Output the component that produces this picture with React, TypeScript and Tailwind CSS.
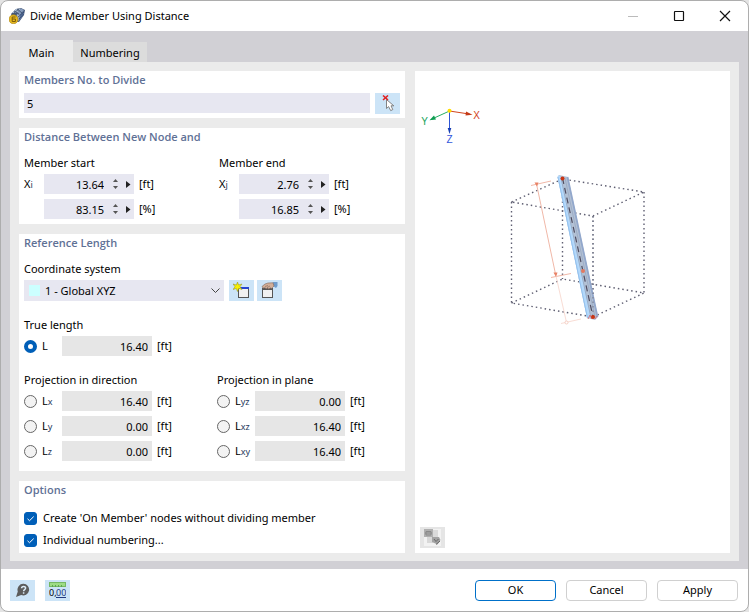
import { useState } from "react";
import type { ReactNode } from "react";

const cubeEdges = [
  "M511.5 202 562.5 179 644 192 593 216Z",
  "M511.5 303 562.5 279 644 293 593 317Z",
  "M511.5 202V303",
  "M562.5 179V279",
  "M644 192V293",
  "M593 216V317",
];

const directions = [
  { id: "Lx", sub: "x", value: "16.40" },
  { id: "Ly", sub: "y", value: "0.00" },
  { id: "Lz", sub: "z", value: "0.00" },
];

const planes = [
  { id: "Lyz", sub: "yz", value: "0.00" },
  { id: "Lxz", sub: "xz", value: "16.40" },
  { id: "Lxy", sub: "xy", value: "16.40" },
];

function Card({ title, className, children }: { title: string; className: string; children: ReactNode }) {
  return (
    <section className={`bg-white px-[5px] ${className}`}>
      <h2 className="font-['Open_Sans',sans-serif] font-semibold text-[#5f7196]">{title}</h2>
      {children}
    </section>
  );
}

function IconButton({ label, children }: { label: string; children: ReactNode }) {
  return (
    <button
      type="button"
      aria-label={label}
      className="flex h-[21px] w-[25px] shrink-0 items-center justify-center bg-[#cce4f7] hover:bg-[#b8daf4]"
    >
      {children}
    </button>
  );
}

function SpinField({ name, sub, label, value, unit }: { name?: string; sub?: string; label: string; value: string; unit: string }) {
  return (
    <div className="flex h-5 items-center">
      <label htmlFor={label} className="w-5 shrink-0">
        {name}
        <span className="text-[9px] text-[#1f3a5c]">{sub}</span>
      </label>
      <div className="flex h-5 w-[90px] items-center bg-[#e7e7f1]">
        <input
          id={label}
          aria-label={label}
          defaultValue={value}
          className="h-5 w-[60px] min-w-0 bg-transparent text-right outline-none"
        />
        <div className="ml-[5px] flex w-3 flex-col items-center gap-1">
          <button type="button" aria-label={`Increase ${label}`}>
            <svg width="5" height="3" className="block fill-[#555]"><path d="M0 3 2.5 0 5 3Z" /></svg>
          </button>
          <button type="button" aria-label={`Decrease ${label}`}>
            <svg width="5" height="3" className="block fill-[#555]"><path d="M0 0 2.5 3 5 0Z" /></svg>
          </button>
        </div>
        <button type="button" aria-label={`More for ${label}`} className="ml-[5px]">
          <svg width="5" height="7" className="block fill-[#222]"><path d="M0 0 4.5 3.5 0 7Z" /></svg>
        </button>
      </div>
      <span className="ml-[5px]">{unit}</span>
    </div>
  );
}

function LengthRow({ id, sub, value, checked, onSelect }: { id: string; sub?: string; value: string; checked: boolean; onSelect: (id: string) => void }) {
  return (
    <div className="flex h-5 items-center">
      <label className="flex w-[38px] shrink-0 items-center gap-[5px]">
        <input
          type="radio"
          name="length"
          aria-label={id}
          checked={checked}
          onChange={() => onSelect(id)}
          className="size-[13px] shrink-0 appearance-none rounded-full border border-[#666] bg-[#f3f3f3] checked:border-4 checked:border-[#005fb8] checked:bg-white"
        />
        <span>
          L<span className="text-[9px] text-[#1f3a5c]">{sub}</span>
        </span>
      </label>
      <input
        readOnly
        aria-label={`${id} value`}
        value={value}
        className="h-5 w-[90px] bg-[#e6e6e6] pr-1 text-right outline-none"
      />
      <span className="ml-[5px]">[ft]</span>
    </div>
  );
}

function CheckRow({ label }: { label: string }) {
  return (
    <label className="flex h-[22px] items-center gap-1.5">
      <span className="relative size-[13px]">
        <input
          type="checkbox"
          defaultChecked
          className="peer block size-[13px] appearance-none rounded-[3px] border border-[#777] bg-[#f3f3f3] checked:border-[#005fb8] checked:bg-[#005fb8]"
        />
        <svg viewBox="0 0 13 13" className="pointer-events-none absolute inset-0 hidden fill-none stroke-white peer-checked:block">
          <path d="M3.5 6.8 5.5 8.7 9.7 4.6" />
        </svg>
      </span>
      {label}
    </label>
  );
}

function AppIcon() {
  return (
    <svg width="16" height="16" viewBox="0 0 16 16">
      <path d="M2 6 7 1 12 0 16 2 15 7 10 14 5 13Z" fill="#46597a" />
      <path d="M3 5 7 1 12 .5 8 5Z" fill="#a9bbd3" />
      <path d="M8 5 12 .5 15 2 11 7Z" fill="#869cbe" />
      <path d="M8 6 11 7 10 13 7 11Z" fill="#a3b3ca" />
      <path d="M11 7 15 3 14.5 7 10.5 12.5Z" fill="#5c76a6" />
      <path d="M5 3 10 6M8 1 13 5M9 9 15 4M10 11 14.5 6M10 1 5 5" stroke="#2a3c5a" strokeWidth=".7" />
      <circle cx="4.5" cy="11.3" r="4.5" fill="#e6b91f" stroke="#a37a0e" strokeWidth=".6" />
      <path d="M6.6 9H3.2V13.5H6.4V11H3.2" fill="none" stroke="#7d5c0a" />
    </svg>
  );
}

function Preview() {
  return (
    <svg viewBox="415 71 315 482" preserveAspectRatio="xMinYMin meet" className="block w-full" role="img" aria-label="Member preview">
      <g strokeWidth="1">
        <path d="M449.5 111 467 113.7" stroke="#d2441d" />
        <path d="M466 111.5 472.5 114.7 465.5 115.5Z" fill="#c43a17" />
        <path d="M449.5 111 435 117.6" stroke="#23ae63" />
        <path d="M429.5 120.2 434 115.6 436 119.6Z" fill="#0d9d50" />
        <path d="M449.5 111V128" stroke="#2d55d5" />
        <path d="M447.7 128H451.3L449.5 134Z" fill="#173eb5" />
        <circle cx="449.5" cy="110.8" r="2" fill="#ffdd00" />
      </g>
      <g fontSize="10" textAnchor="middle" fontFamily="Liberation Sans, Arial, sans-serif">
        <text x="476.5" y="118.5" fill="#d2441d">X</text>
        <text x="424.5" y="125" fill="#16a35a">Y</text>
        <text x="449.5" y="143" fill="#3156dc">Z</text>
      </g>

      {/* bounding box */}
      {cubeEdges.map((d) => (
        <path key={d} d={d} fill="none" stroke="#5f5f72" strokeWidth="1.4" strokeDasharray="1.5 3" />
      ))}

      {/* dimension line */}
      <g fill="none" stroke="#f0b8a8">
        <path d="M536.5 184 555.5 274M531 185.5 551 181M551 277.5 571 273.5" />
        <path d="M556 276 566.5 322.5M561 323.5 581 319" stroke="#f9ddd5" />
        <circle cx="566.5" cy="322.5" r="1.5" fill="#fff" stroke="#f5cfc4" />
      </g>
      <path d="M534.5 182.5H538.5L537 186.5ZM553.5 272.5H557.5L556 277Z" fill="#e98266" />

      {/* member */}
      <path d="M557.5 177 559 175 568 177 598 317 595 320 587 318Z" fill="#b3c1d4" />
      <path d="M557.5 177 559 175 561.5 178 591 317 587 318Z" fill="#b4d9fb" />
      <path d="M558 177 587.5 318" stroke="#93c1ee" />
      <path d="M561 178 590.8 317" stroke="#9aacc5" />
      <path d="M567.5 177 597.5 317" stroke="#93a8cc" strokeWidth="1.8" />
      <path d="M565 178 595 317" stroke="#9dadc6" />
      <path d="M593 216V317" stroke="#7c8193" strokeWidth="1.2" strokeDasharray="1.5 3" />
      <path d="M562.5 178 593 317" stroke="#4f4c60" strokeWidth="1.2" strokeDasharray="6 4" />
      <circle cx="562.5" cy="178.5" r="2" fill="#cc3512" />
      <circle cx="583" cy="271" r="2" fill="#e27a61" />
      <path d="M588 319 590 315 592 319M595 319 597 316" fill="none" stroke="#cf737e" />
      <circle cx="593" cy="317" r="2" fill="#cc3512" />
    </svg>
  );
}

export default function App() {
  const [length, setLength] = useState("L");

  return (
    <div className="min-h-screen bg-[#e4e4e4] font-['Noto_Sans','Open_Sans',sans-serif] text-[11px] leading-[18px] text-black">
      <div className="flex min-h-screen flex-col overflow-hidden rounded-lg border border-[#adadad] bg-white">
        <header className="flex h-[30px] items-center pr-[17px] pl-2">
          <AppIcon />
          <h1 className="ml-[5px]">Divide Member Using Distance</h1>
          <div className="ml-auto flex gap-[34px]">
            <button type="button" aria-label="Minimize" disabled>
              <svg width="12" height="12" className="block"><path d="M1 6.5H11" stroke="#bbb" /></svg>
            </button>
            <button type="button" aria-label="Maximize">
              <svg width="12" height="12" className="block"><rect x="1.5" y="1.5" width="9" height="9" rx=".5" fill="none" stroke="#111" strokeWidth="1.2" /></svg>
            </button>
            <button type="button" aria-label="Close">
              <svg width="12" height="12" className="block"><path d="M1 1 11 11M11 1 1 11" stroke="#111" strokeWidth="1.2" /></svg>
            </button>
          </div>
        </header>

        <main className="flex grow flex-col bg-[#d1d0d5] px-[9px] pt-[9px] pb-2">
          <div role="tablist" className="flex items-end">
            <button type="button" role="tab" aria-selected="true" className="h-[22px] w-[63px] bg-[#ebebeb] pt-1">
              Main
            </button>
            <button type="button" role="tab" aria-selected="false" className="h-5 w-[74px] bg-[#dcdcdc] pt-0.5">
              Numbering
            </button>
          </div>

          <div role="tabpanel" className="flex grow gap-2.5 bg-[#ebebeb] px-[9px] pt-[9px] pb-2">
            <div className="flex w-[386px] shrink-0 flex-col gap-2.5">
              <Card title="Members No. to Divide" className="pb-1">
                <div className="mt-1 flex items-start gap-[5px]">
                  <input
                    aria-label="Members No. to Divide"
                    defaultValue="5"
                    className="h-5 min-w-0 grow bg-[#e7e7f1] px-[3px] outline-none"
                  />
                  <IconButton label="Select members">
                    <svg width="17" height="17" viewBox="0 0 17 17">
                      <path d="M7.5 4.5V13.5L9.6 11.6 11.7 15.6 13.8 14.6 12 10.8H14.8Z" fill="#fff" stroke="#777" strokeWidth=".9" />
                      <path d="M4 .5 9 5M9 .5 4 5" stroke="#e02020" strokeWidth="1.5" />
                    </svg>
                  </IconButton>
                </div>
              </Card>

              <Card title="Distance Between New Node and" className="pb-[5px]">
                <div className="mt-2 grid grid-cols-[195px_1fr]">
                  <fieldset>
                    <legend>Member start</legend>
                    <div className="mt-0.5 flex flex-col gap-[5px]">
                      <SpinField name="X" sub="i" label="Start distance" value="13.64" unit="[ft]" />
                      <SpinField label="Start percentage" value="83.15" unit="[%]" />
                    </div>
                  </fieldset>
                  <fieldset>
                    <legend>Member end</legend>
                    <div className="mt-0.5 flex flex-col gap-[5px]">
                      <SpinField name="X" sub="j" label="End distance" value="2.76" unit="[ft]" />
                      <SpinField label="End percentage" value="16.85" unit="[%]" />
                    </div>
                  </fieldset>
                </div>
              </Card>

              <Card title="Reference Length" className="pb-2.5">
                <label htmlFor="system" className="mt-2 block">
                  Coordinate system
                </label>
                <div className="mt-0.5 flex">
                  <div className="relative mr-[5px] w-[200px]">
                    <select id="system" className="block h-[21px] w-full appearance-none bg-[#e7e7f1] pl-[21px] outline-none">
                      <option>1 - Global XYZ</option>
                    </select>
                    <span className="pointer-events-none absolute top-[5px] left-[5px] size-[11px] bg-[#ccffff]" />
                    <svg width="9" height="5" className="pointer-events-none absolute top-2 right-1 fill-none stroke-[#444]">
                      <path d="M.5 .5 4.5 4.5 8.5 .5" />
                    </svg>
                  </div>
                  <IconButton label="New coordinate system">
                    <svg width="17" height="17" viewBox="0 0 17 17">
                      <rect x="5.5" y="5.5" width="10" height="10" fill="#f1f1f1" stroke="#555" />
                      <path d="M6 5H16V7H6Z" fill="#2445d0" />
                      <path d="M4.5 0 5.6 3 9 2 7 4.7 9 7.5 5.7 6.5 4.5 9.5 3.3 6.5 0 7.5 2 4.7 0 2 3.4 3Z" fill="#f8f000" stroke="#8b8b22" strokeWidth=".5" />
                    </svg>
                  </IconButton>
                  <div className="ml-[3px]">
                    <IconButton label="Edit coordinate system">
                      <svg width="17" height="17" viewBox="0 0 17 17">
                        <rect x="1.5" y="6.5" width="10" height="9" fill="#f1f1f1" stroke="#555" />
                        <path d="M1 6H12V8H1Z" fill="#555" />
                        <path d="M12 0H16.5V4L15 6 12 4Z" fill="#6f9ccc" />
                        <path d="M1 4.5 4 2 7 1 12 .8 13 4 10.5 6.5 9 5.8 8 7.2 6.5 6 5 7 4.2 5.5 2 6.2Z" fill="#d3ae97" stroke="#80665a" strokeWidth=".6" />
                        <path d="M4 4.5 7 3.5M6 5.5 9 4" stroke="#80665a" strokeWidth=".6" />
                      </svg>
                    </IconButton>
                  </div>
                </div>

                <fieldset className="mt-[15px]">
                  <legend className="mb-0.5">True length</legend>
                  <LengthRow id="L" value="16.40" checked={length === "L"} onSelect={setLength} />
                </fieldset>

                <div className="mt-[15px] grid grid-cols-[193px_1fr]">
                  <fieldset>
                    <legend>Projection in direction</legend>
                    <div className="mt-0.5 flex flex-col gap-[5px]">
                      {directions.map((row) => (
                        <LengthRow key={row.id} {...row} checked={length === row.id} onSelect={setLength} />
                      ))}
                    </div>
                  </fieldset>
                  <fieldset>
                    <legend>Projection in plane</legend>
                    <div className="mt-0.5 flex flex-col gap-[5px]">
                      {planes.map((row) => (
                        <LengthRow key={row.id} {...row} checked={length === row.id} onSelect={setLength} />
                      ))}
                    </div>
                  </fieldset>
                </div>
              </Card>

              <Card title="Options" className="grow pb-0.5">
                <div className="mt-2">
                  <CheckRow label="Create 'On Member' nodes without dividing member" />
                  <CheckRow label="Individual numbering..." />
                </div>
              </Card>
            </div>

            <div className="relative min-w-0 grow bg-white">
              <Preview />
              <button
                type="button"
                aria-label="View settings"
                className="absolute bottom-[5px] left-[5px] flex h-[21px] w-[25px] items-center justify-center bg-[#e5e5e5]"
              >
                <svg width="17" height="17" viewBox="0 0 17 17">
                  <path d="M0 0H17V17H0Z" fill="#f2f2f2" />
                  <path d="M0 0H9V8H0Z" fill="#b0b0b0" />
                  <path d="M9 1H14V8H9Z" fill="#dadada" />
                  <path d="M2 2.5H7V6H2ZM1 4H8" fill="none" stroke="#8a8a8a" />
                  <path d="M3 8H9V14H3Z" fill="#d8d8d8" />
                  <path d="M8 8H15L16.5 11 13.5 15.5 8 13Z" fill="#a3a3a3" />
                  <path d="M10 10 12 12.5 14.5 10M12 15.5 16 12" fill="none" stroke="#666" />
                </svg>
              </button>
            </div>
          </div>
        </main>

        <footer className="flex h-[42px] items-center pr-2.5 pl-[9px]">
          <IconButton label="Help">
            <svg width="15" height="15" viewBox="0 0 15 15">
              <path d="M8.5 .8A5.8 5.8 0 1 1 6.2 12L1 14 2.8 8.5A5.8 5.8 0 0 1 8.5 .8Z" fill="#5c5c5c" />
              <path d="M6.6 5.2C6.6 2.8 10.6 2.9 10.6 5 10.6 6.6 8.6 6.5 8.6 8.2M8.6 9.2V10.8" fill="none" stroke="#dcecf8" strokeWidth="1.5" />
            </svg>
          </IconButton>
          <div className="ml-2.5">
            <IconButton label="Units and decimal places">
              <svg width="17" height="17" viewBox="0 0 17 17">
                <rect x=".5" y=".5" width="16" height="4" fill="#9ddc86" stroke="#75b863" />
                <path d="M3.5 3V5M6.5 3V5M9.5 3V5M12.5 3V5" stroke="#5da450" />
                <text x="0" y="14" fontSize="9" fontFamily="Noto Sans, sans-serif">0,</text>
                <text x="7" y="14" fontSize="9" fill="#233a80" fontFamily="Noto Sans, sans-serif">00</text>
                <path d="M7 15.5H17" stroke="#233a80" />
              </svg>
            </IconButton>
          </div>
          <div className="ml-auto flex gap-2.5">
            <button type="button" className="h-[21px] w-[81px] rounded-[4px] border border-[#0070c9] bg-white">
              OK
            </button>
            <button type="button" className="h-[21px] w-[81px] rounded-[4px] border border-[#d0d0d0] bg-white">
              Cancel
            </button>
            <button type="button" className="h-[21px] w-[81px] rounded-[4px] border border-[#d0d0d0] bg-white">
              Apply
            </button>
          </div>
        </footer>
      </div>
    </div>
  );
}
